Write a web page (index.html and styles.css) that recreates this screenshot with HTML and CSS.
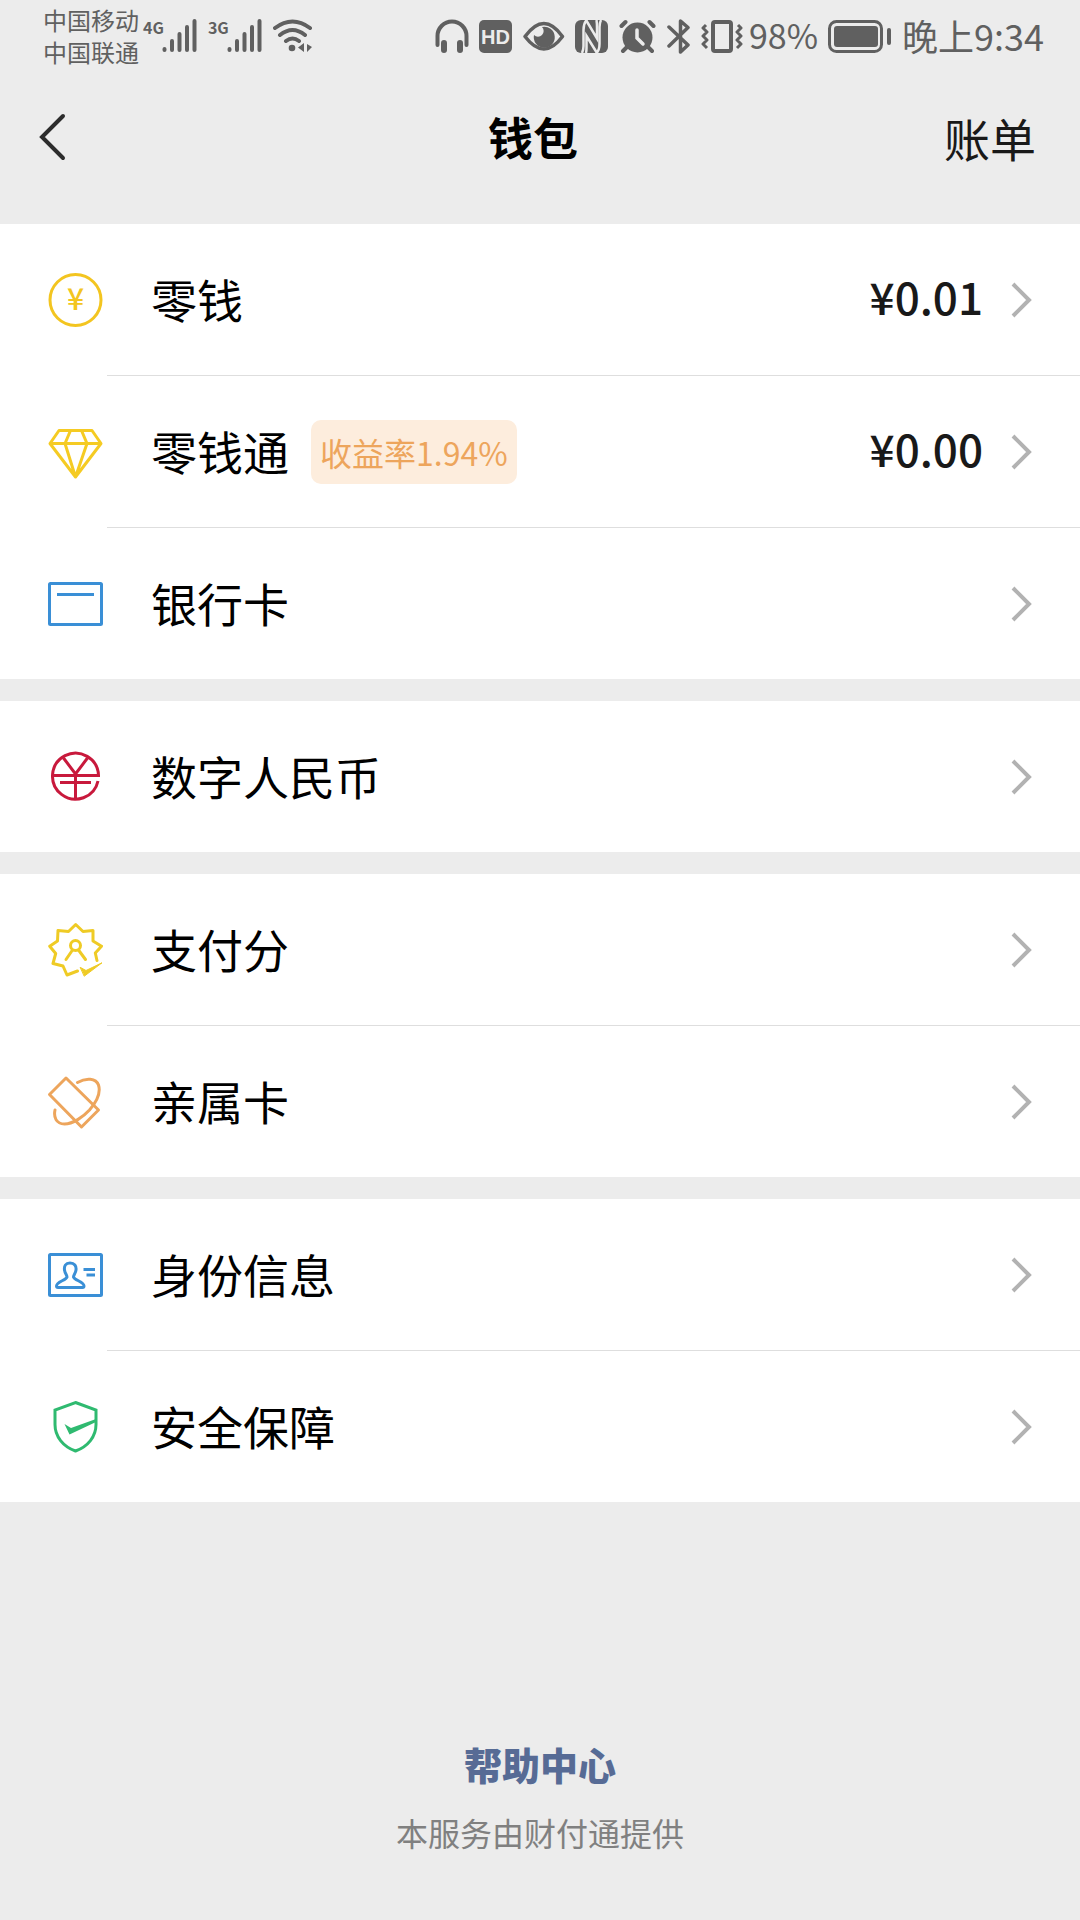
FILE: index.html
```html
<!DOCTYPE html>
<html lang="zh-CN">
<head>
    <meta charset="UTF-8">
    <meta name="viewport" content="width=device-width, initial-scale=1.0">
    <title>钱包</title>
    <link rel="stylesheet" href="styles.css">
</head>
<body>
    <div class="status-bar">
        <div class="status-left">
            <div class="carriers">
                <span>中国移动</span>
                <span>中国联通</span>
            </div>
            <div class="signal">
                <span class="net">4G</span>
                <svg width="36" height="36" viewBox="0 0 36 36" stroke="#606060" stroke-width="4" stroke-linecap="round">
                    <path d="M2.5 31v1M10 23v9M17.500 16v16M25 9v23M32.500 3v29"/>
                </svg>
            </div>
            <div class="signal">
                <span class="net">3G</span>
                <svg width="36" height="36" viewBox="0 0 36 36" stroke="#606060" stroke-width="4" stroke-linecap="round">
                    <path d="M2.5 31v1M10 23v9M17.500 16v16M25 9v23M32.500 3v29"/>
                </svg>
            </div>
            <svg width="40" height="36" viewBox="0 0 40 36" fill="none" stroke="#606060" stroke-width="4" stroke-linecap="round">
                <path d="M2 10Q19.500-3 37 10M7 17Q19.500 7 32 17M13 23Q19.500 18 26 23"/>
                <circle cx="19" cy="30" r="3.300" fill="#606060" stroke="none"/>
                <path d="M31 25v9l-6-4.500zM34 26v8l5-5z" fill="#606060" stroke="none"/>
            </svg>
        </div>
        <div class="status-right">
            <svg width="34" height="36" viewBox="0 0 34 36" fill="none" stroke="#606060" stroke-width="4" stroke-linecap="round">
                <path d="M2.500 27V18a14.500 14.500 0 0 1 29 0v9"/>
                <path d="M9 25v7M25 25v7" stroke-width="6"/>
            </svg>
            <svg width="34" height="36" viewBox="0 0 34 36">
                <rect y="2" width="33" height="33" rx="5" fill="#606060"/>
                <text class="hd" x="16.500" y="26">HD</text>
            </svg>
            <svg width="42" height="36" viewBox="0 0 42 36" fill="none" stroke="#606060" stroke-width="3.500">
                <path d="M2 18.500Q21-7.500 39.500 18.500Q21 43.500 2 18.500z" stroke-linejoin="round"/>
                <path d="M19 9a10.500 10.500 0 1 1-8 8a5 5 0 0 0 8-8z" fill="#606060" stroke="none"/>
            </svg>
            <svg width="34" height="36" viewBox="0 0 34 36" fill="none" stroke="#ececec" stroke-width="2.500">
                <rect y="2" width="33" height="33" rx="6" fill="#606060" stroke="none"/>
                <path d="M11.500 2Q8.500 6 8.500 12V28Q8.500 32 7 35"/>
                <path d="M11 2L22 20.500V10Q22 5 21.500 2"/>
                <path d="M22 35L11.500 18V30Q11.500 33 11 35"/>
                <path d="M21.500 35Q24.500 32 24.500 26V9Q24.500 5 26 2"/>
            </svg>
            <svg width="38" height="36" viewBox="0 0 38 36" fill="none" stroke="#606060" stroke-width="4" stroke-linecap="round">
                <circle cx="18.500" cy="19.500" r="15" fill="#606060" stroke="none"/>
                <path d="M2.500 8l4-4M34.500 8l-4-4M4 33l4-4M33 33l-4-4"/>
                <path d="M18 12v8l6 6" stroke="#ececec" stroke-width="3.500"/>
            </svg>
            <svg width="24" height="36" viewBox="0 0 24 36" fill="none" stroke="#606060" stroke-width="3.500" stroke-linecap="round" stroke-linejoin="round">
                <path d="M2 9l19 18l-7.500 7V3L21 9.500L2 28"/>
            </svg>
            <svg class="vibrate" width="44" height="36" viewBox="0 0 44 36" fill="none" stroke="#606060" stroke-width="4" stroke-linejoin="round">
                <rect x="12" y="4" width="18" height="29" rx="2"/>
                <path d="M5 7l-3 3l4 4l-4 4l4 4l-4 4l4 4M37 7l3 3l-4 4l4 4l-4 4l4 4l-4 4" stroke-width="3"/>
            </svg>
            <span class="battery-text">98%</span>
            <svg width="64" height="36" viewBox="0 0 64 36" fill="none">
                <rect x="1.500" y="3.500" width="52" height="30" rx="7" stroke="#606060" stroke-width="3"/>
                <rect x="6" y="8" width="44" height="21" rx="3" fill="#606060"/>
                <rect x="59" y="10" width="4" height="17" rx="2" fill="#606060"/>
            </svg>
            <span class="time">晚上9:34</span>
        </div>
    </div>

    <header class="nav">
        <button type="button" class="back" aria-label="返回">
            <svg width="28" height="50" viewBox="0 0 28 50" fill="none" stroke="#2c2c2c" stroke-width="4" stroke-linecap="round">
                <path d="M24 4L3 25l21 21"/>
            </svg>
        </button>
        <h1>钱包</h1>
        <a class="bill" href="#">账单</a>
    </header>

    <main>
        <ul class="group">
            <li>
                <a class="cell" href="#">
                    <svg class="icon" viewBox="0 0 56 56" fill="none" stroke="#f3c520" stroke-width="3">
                        <circle cx="28.500" cy="28" r="25.500"/>
                        <text class="yen" x="28.500" y="38" stroke="none">¥</text>
                    </svg>
                    <span class="label">零钱</span>
                    <span class="amount">¥0.01</span>
                    <svg class="arrow" viewBox="0 0 22 36"><path d="M2 2l16 16L2 34"/></svg>
                </a>
            </li>
            <li>
                <a class="cell" href="#">
                    <svg class="icon" viewBox="0 0 56 56" fill="none" stroke="#f5cb23" stroke-width="3" stroke-linejoin="round">
                        <path d="M12 6.500h33l9 13L28.500 53L3 19.500zM3 19.500h51M23.500 6.500l-5.500 13L28.500 53L40 19.500l-5.500-13"/>
                    </svg>
                    <span class="label">零钱通</span>
                    <span class="tag">收益率1.94%</span>
                    <span class="amount">¥0.00</span>
                    <svg class="arrow" viewBox="0 0 22 36"><path d="M2 2l16 16L2 34"/></svg>
                </a>
            </li>
            <li>
                <a class="cell" href="#">
                    <svg class="icon" viewBox="0 0 56 56" fill="none" stroke="#3a8fd6" stroke-width="3">
                        <rect x="2.500" y="7.500" width="52" height="41" rx="1"/>
                        <path d="M10 18.500h37"/>
                    </svg>
                    <span class="label">银行卡</span>
                    <svg class="arrow" viewBox="0 0 22 36"><path d="M2 2l16 16L2 34"/></svg>
                </a>
            </li>
        </ul>

        <ul class="group">
            <li>
                <a class="cell" href="#">
                    <svg class="icon" viewBox="0 0 56 56" fill="none" stroke="#c8193c" stroke-width="3">
                        <path d="M5.500 26.500H51.500A23 23 0 1 0 51 32"/>
                        <path d="M16.500 9L28.500 25L40.500 9M28.500 24V50M13 33.500h31"/>
                    </svg>
                    <span class="label">数字人民币</span>
                    <svg class="arrow" viewBox="0 0 22 36"><path d="M2 2l16 16L2 34"/></svg>
                </a>
            </li>
        </ul>

        <ul class="group">
            <li>
                <a class="cell" href="#">
                    <svg class="icon" viewBox="0 0 56 56" fill="none" stroke="#efcb25" stroke-width="3" stroke-linecap="round" stroke-linejoin="round">
                        <path d="M50 38.500L48.300 31L54.500 24.200L46 19L46 8.500L36 9.500L28.700 2.500L21.500 9.500L11 8.500L10.500 19L2.700 24.200L8.700 31.500L6 41.500L16 44L20 53L30.500 49"/>
                        <circle cx="28.500" cy="23.500" r="5"/>
                        <path d="M25.500 28L19 37.500M31.500 28L38.500 37.500"/>
                        <path d="M33.500 45.500L39 48.500L55 40.800L37.500 54z" fill="#efcb25" stroke-width="1"/>
                    </svg>
                    <span class="label">支付分</span>
                    <svg class="arrow" viewBox="0 0 22 36"><path d="M2 2l16 16L2 34"/></svg>
                </a>
            </li>
            <li>
                <a class="cell" href="#">
                    <svg class="icon" viewBox="0 0 56 56" fill="none" stroke="#eda55c" stroke-width="3" stroke-linecap="round" stroke-linejoin="round">
                        <path d="M19 4L2.500 20.500L34.500 53L51.500 36z"/>
                        <path d="M30.500 8.500C39 3.500 49 4 51.500 11C54 19 49.500 28 42.500 36C36 43 26 50 17.500 50C9 50 6.500 43 8 36"/>
                    </svg>
                    <span class="label">亲属卡</span>
                    <svg class="arrow" viewBox="0 0 22 36"><path d="M2 2l16 16L2 34"/></svg>
                </a>
            </li>
        </ul>

        <ul class="group">
            <li>
                <a class="cell" href="#">
                    <svg class="icon" viewBox="0 0 56 56" fill="none" stroke="#3a8fd6" stroke-width="3">
                        <rect x="2.500" y="7.500" width="52" height="41" rx="1"/>
                        <path d="M23 16C18.500 16 17 19 17.500 23C18 26.500 20 28 20 30C19 33.500 9.500 34.500 9.500 39Q9.500 40.500 11 40.500H35.500Q37 40.500 37 39C37 34.500 27.500 33.500 26.500 30C26.500 28 28.500 26.500 29 23C29.500 19 27.500 16 23 16z"/>
                        <path d="M36.500 22.500H48M39.500 28H48"/>
                    </svg>
                    <span class="label">身份信息</span>
                    <svg class="arrow" viewBox="0 0 22 36"><path d="M2 2l16 16L2 34"/></svg>
                </a>
            </li>
            <li>
                <a class="cell" href="#">
                    <svg class="icon" viewBox="0 0 56 56" fill="none" stroke="#2fba70" stroke-width="3">
                        <path d="M28.500 3.500L49 11V25.500C49 37.500 41 47.500 28.500 52C16 47.500 8 37.500 8 25.500V11z"/>
                        <path d="M17.500 25L24 29L49 20V23L22.500 35.500z" fill="#2fba70" stroke="none"/>
                    </svg>
                    <span class="label">安全保障</span>
                    <svg class="arrow" viewBox="0 0 22 36"><path d="M2 2l16 16L2 34"/></svg>
                </a>
            </li>
        </ul>
    </main>

    <footer class="footer">
        <a href="#">帮助中心</a>
        <p>本服务由财付通提供</p>
    </footer>
</body>
</html>
```
FILE: styles.css
```css
* {
    box-sizing: border-box;
}
body {
    margin: 0;
    min-height: 100vh;
    display: flex;
    flex-direction: column;
    font-family: "Noto Sans CJK SC", sans-serif;
    background-color: #ececec;
    color: #000;
}
a {
    color: inherit;
    text-decoration: none;
}
svg {
    display: block;
    flex: none;
}

/* barra de estado */
.status-bar {
    height: 74px;
    padding: 0 36px 2px 43px;
    display: flex;
    justify-content: space-between;
    align-items: center;
    color: #606060;
}
.status-left, .status-right {
    display: flex;
    align-items: center;
    gap: 10px;
}
.carriers {
    display: flex;
    flex-direction: column;
    margin-right: -6px;
    font-size: 24px;
    line-height: 32px;
}
.signal {
    display: flex;
    align-items: flex-start;
}
.net {
    margin-right: -2px;
    font-size: 16px;
    font-weight: bold;
    line-height: 18px;
}
.hd {
    font-family: "Liberation Sans", sans-serif;
    font-size: 20px;
    font-weight: bold;
    text-anchor: middle;
    fill: #ececec;
}
.battery-text, .time {
    line-height: 40px;
    padding-bottom: 2px;
}
.battery-text {
    margin-left: -6px;
    font-size: 34px;
}
.time {
    font-size: 36px;
}

/* encabezado */
.nav {
    height: 150px;
    padding: 0 44px 24px 24px;
    display: flex;
    justify-content: space-between;
    align-items: center;
}
.back {
    width: 98px;
    padding: 0 15px;
    border: none;
    background: none;
    cursor: pointer;
}
.nav h1 {
    margin: 0;
    font-size: 45px;
    font-weight: bold;
    line-height: 60px;
}
.bill {
    font-size: 46px;
    line-height: 60px;
    color: #191919;
}

/* lista */
main {
    display: flex;
    flex-direction: column;
    gap: 22px;
}
.group {
    margin: 0;
    padding: 0;
    list-style: none;
    background: #fff;
}
.group li + li::before {
    content: "";
    display: block;
    height: 1px;
    margin-left: 107px;
    background: #dedede;
}
.cell {
    height: 151px;
    padding: 0 47px;
    display: flex;
    align-items: center;
}
.cell:active {
    background: #ececec;
}
.icon {
    width: 56px;
    height: 56px;
    margin-right: 48px;
}
.yen {
    font-size: 30px;
    font-weight: 500;
    text-anchor: middle;
    fill: #f3c520;
}
.label {
    padding-bottom: 4px;
    font-size: 46px;
    line-height: 64px;
}
.tag {
    margin-left: 22px;
    padding: 0 9px;
    border-radius: 10px;
    font-size: 32px;
    line-height: 64px;
    background: #fdeddd;
    color: #eda55c;
}
.amount {
    margin-left: auto;
    padding-bottom: 8px;
    font-size: 44px;
    font-weight: 500;
    line-height: 64px;
    color: #191919;
}
.arrow {
    width: 22px;
    height: 36px;
    margin-left: auto;
    fill: none;
    stroke: #b2b2b2;
    stroke-width: 4;
}
.amount + .arrow {
    margin-left: 28px;
}

/* pie */
.footer {
    margin-top: auto;
    padding-bottom: 64px;
    text-align: center;
}
.footer a {
    font-size: 38px;
    font-weight: 900;
    line-height: 52px;
    color: #576b95;
}
.footer p {
    margin: 18px 0 0;
    font-size: 32px;
    line-height: 48px;
    color: #808080;
}
```
